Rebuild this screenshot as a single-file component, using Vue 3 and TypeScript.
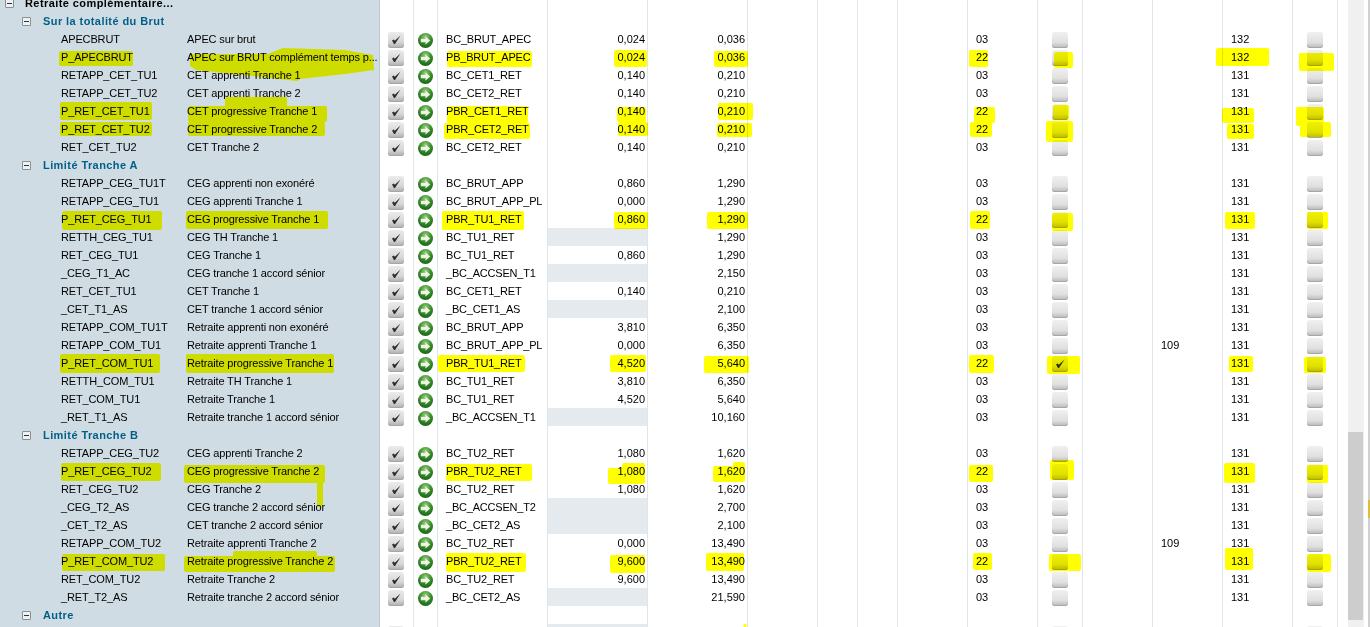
<script setup lang="ts">
type Row = {
  kind: 'root' | 'group' | 'item' | 'tail'
  code?: string
  label?: string
  base?: string
  a?: string
  b?: string
  o?: string
  on?: boolean
  n?: string
  t?: string
}

const item = (code: string, label: string, base: string, a: string, b: string, t = '131', o = '03', extra: Partial<Row> = {}): Row => ({
  kind: 'item', code, label, base, a, b, t, o, ...extra,
})

const rows: Row[] = [
  { kind: 'root', label: 'Retraite complémentaire...' },
  { kind: 'group', label: 'Sur la totalité du Brut' },
  item('APECBRUT', 'APEC sur brut', 'BC_BRUT_APEC', '0,024', '0,036', '132'),
  item('P_APECBRUT', 'APEC sur BRUT complément temps p...', 'PB_BRUT_APEC', '0,024', '0,036', '132', '22'),
  item('RETAPP_CET_TU1', 'CET apprenti Tranche 1', 'BC_CET1_RET', '0,140', '0,210'),
  item('RETAPP_CET_TU2', 'CET apprenti Tranche 2', 'BC_CET2_RET', '0,140', '0,210'),
  item('P_RET_CET_TU1', 'CET progressive Tranche 1', 'PBR_CET1_RET', '0,140', '0,210', '131', '22'),
  item('P_RET_CET_TU2', 'CET progressive Tranche 2', 'PBR_CET2_RET', '0,140', '0,210', '131', '22'),
  item('RET_CET_TU2', 'CET Tranche 2', 'BC_CET2_RET', '0,140', '0,210'),
  { kind: 'group', label: 'Limité Tranche A' },
  item('RETAPP_CEG_TU1T', 'CEG apprenti non exonéré', 'BC_BRUT_APP', '0,860', '1,290'),
  item('RETAPP_CEG_TU1', 'CEG apprenti Tranche 1', 'BC_BRUT_APP_PL', '0,000', '1,290'),
  item('P_RET_CEG_TU1', 'CEG progressive Tranche 1', 'PBR_TU1_RET', '0,860', '1,290', '131', '22'),
  item('RETTH_CEG_TU1', 'CEG TH Tranche 1', 'BC_TU1_RET', '', '1,290'),
  item('RET_CEG_TU1', 'CEG Tranche 1', 'BC_TU1_RET', '0,860', '1,290'),
  item('_CEG_T1_AC', 'CEG tranche 1 accord sénior', '_BC_ACCSEN_T1', '', '2,150'),
  item('RET_CET_TU1', 'CET Tranche 1', 'BC_CET1_RET', '0,140', '0,210'),
  item('_CET_T1_AS', 'CET tranche 1 accord sénior', '_BC_CET1_AS', '', '2,100'),
  item('RETAPP_COM_TU1T', 'Retraite apprenti non exonéré', 'BC_BRUT_APP', '3,810', '6,350'),
  item('RETAPP_COM_TU1', 'Retraite apprenti Tranche 1', 'BC_BRUT_APP_PL', '0,000', '6,350', '131', '03', { n: '109' }),
  item('P_RET_COM_TU1', 'Retraite progressive Tranche 1', 'PBR_TU1_RET', '4,520', '5,640', '131', '22', { on: true }),
  item('RETTH_COM_TU1', 'Retraite TH Tranche 1', 'BC_TU1_RET', '3,810', '6,350'),
  item('RET_COM_TU1', 'Retraite Tranche 1', 'BC_TU1_RET', '4,520', '5,640'),
  item('_RET_T1_AS', 'Retraite tranche 1 accord sénior', '_BC_ACCSEN_T1', '', '10,160'),
  { kind: 'group', label: 'Limité Tranche B' },
  item('RETAPP_CEG_TU2', 'CEG apprenti Tranche 2', 'BC_TU2_RET', '1,080', '1,620'),
  item('P_RET_CEG_TU2', 'CEG progressive Tranche 2', 'PBR_TU2_RET', '1,080', '1,620', '131', '22'),
  item('RET_CEG_TU2', 'CEG Tranche 2', 'BC_TU2_RET', '1,080', '1,620'),
  item('_CEG_T2_AS', 'CEG tranche 2 accord sénior', '_BC_ACCSEN_T2', '', '2,700'),
  item('_CET_T2_AS', 'CET tranche 2 accord sénior', '_BC_CET2_AS', '', '2,100'),
  item('RETAPP_COM_TU2', 'Retraite apprenti Tranche 2', 'BC_TU2_RET', '0,000', '13,490', '131', '03', { n: '109' }),
  item('P_RET_COM_TU2', 'Retraite progressive Tranche 2', 'PBR_TU2_RET', '9,600', '13,490', '131', '22'),
  item('RET_COM_TU2', 'Retraite Tranche 2', 'BC_TU2_RET', '9,600', '13,490'),
  item('_RET_T2_AS', 'Retraite tranche 2 accord sénior', '_BC_CET2_AS', '', '21,590'),
  { kind: 'group', label: 'Autre' },
  { kind: 'tail' },
]

// marker strokes painted over the grid: x, y, w, h
const strokes: number[][] = [
  [59, 51, 74, 15], [60, 102, 92, 18], [60, 122, 92, 14], [188, 106, 139, 16], [225, 97, 62, 10],
  [188, 122, 137, 14], [62, 211, 100, 19], [186, 211, 142, 18], [60, 354, 100, 19], [186, 354, 148, 19],
  [61, 463, 100, 18], [184, 465, 141, 18], [317, 480, 6, 27], [62, 554, 103, 17], [184, 556, 151, 16], [233, 551, 84, 6],
  [447, 51, 85, 16], [614, 50, 33, 17], [714, 51, 34, 16], [447, 106, 81, 17], [617, 107, 29, 15], [718, 103, 35, 17],
  [444, 123, 86, 16], [618, 122, 30, 14], [717, 123, 35, 14], [442, 211, 82, 19], [614, 212, 34, 17], [707, 212, 41, 17],
  [438, 355, 87, 17], [610, 355, 36, 17], [704, 356, 45, 17], [446, 464, 86, 17], [608, 468, 37, 16], [622, 463, 23, 6],
  [713, 466, 32, 16], [733, 462, 12, 6], [446, 553, 80, 19], [610, 555, 35, 18], [706, 553, 38, 18], [743, 624, 4, 3],
  [969, 50, 19, 17], [1054, 52, 19, 16], [1216, 48, 53, 18], [1299, 53, 35, 18], [974, 107, 21, 16], [1053, 105, 16, 15],
  [1222, 108, 32, 15], [1296, 107, 28, 19], [970, 122, 22, 15], [1046, 121, 27, 21], [1227, 124, 27, 15], [1300, 122, 31, 15],
  [970, 211, 20, 18], [1052, 213, 21, 18], [1225, 212, 30, 17], [1307, 212, 21, 17], [969, 355, 25, 18], [1047, 356, 33, 18],
  [1229, 356, 24, 16], [1304, 357, 22, 16], [969, 465, 24, 17], [1050, 460, 24, 20], [1224, 463, 31, 20], [1307, 465, 21, 18],
  [973, 553, 19, 17], [1049, 554, 32, 17], [1225, 548, 28, 22], [1307, 554, 24, 18],
]
const apecBlob = '190,54 268,54 283,48 345,50 373,55 374,70 345,74 300,79 297,81 270,78 196,70 190,66'
</script>

<template>
  <div class="screen">
    <svg class="defs" width="0" height="0" aria-hidden="true">
      <defs>
        <radialGradient id="ball" cx="50%" cy="28%" r="75%">
          <stop offset="0" stop-color="#9fd386" />
          <stop offset="0.45" stop-color="#3f9332" />
          <stop offset="1" stop-color="#155f13" />
        </radialGradient>
      </defs>
    </svg>

    <div class="grid">
      <div v-for="(r, i) in rows" :key="i" class="row">
        <div class="tree" :class="r.kind">
          <template v-if="r.kind === 'root' || r.kind === 'group'">
            <span class="toggle"></span>
            <span class="title">{{ r.label }}</span>
          </template>
          <template v-else-if="r.kind === 'item'">
            <span class="code">{{ r.code }}</span>
            <span class="label">{{ r.label }}</span>
          </template>
        </div>

        <div class="cell center">
          <span v-if="r.kind === 'item' || r.kind === 'tail'" class="box dark">
            <svg viewBox="0 0 16 16" width="16" height="16"><path d="M4 8.5 L6 12 L7 12 L12.5 3.5 L6.8 8.8 L5.8 7.6 Z" fill="#2e2e2e" /></svg>
          </span>
        </div>
        <div class="cell center">
          <svg v-if="r.kind === 'item' || r.kind === 'tail'" class="go" viewBox="0 0 16 16" width="15" height="15">
            <circle cx="8" cy="8" r="8" fill="url(#ball)" />
            <path d="M3 6.2 H8 V3.8 L13 8 L8 12.2 V9.8 H3 Z" fill="#eef3e2" />
          </svg>
        </div>
        <div class="cell text">{{ r.base }}</div>
        <div class="cell num" :class="{ blank: r.kind === 'tail' || (r.kind === 'item' && !r.a) }">{{ r.a }}</div>
        <div class="cell num">{{ r.b }}</div>
        <div class="cell"></div>
        <div class="cell"></div>
        <div class="cell"></div>
        <div class="cell"></div>
        <div class="cell text short">{{ r.o }}</div>
        <div class="cell center">
          <span v-if="r.kind === 'item' || r.kind === 'tail'" class="box">
            <svg v-if="r.on" viewBox="0 0 16 16" width="16" height="16"><path d="M4 8.5 L6 12 L7 12 L12.5 3.5 L6.8 8.8 L5.8 7.6 Z" fill="#2e2e2e" /></svg>
          </span>
        </div>
        <div class="cell"></div>
        <div class="cell text short">{{ r.n }}</div>
        <div class="cell text short">{{ r.t }}</div>
        <div class="cell center">
          <span v-if="r.kind === 'item' || r.kind === 'tail'" class="box"></span>
        </div>
      </div>
    </div>

    <div class="scrollbar"><div class="thumb"></div></div>
    <div class="edge"><div class="mark"></div></div>

    <svg class="marker" width="1370" height="627" viewBox="0 0 1370 627">
      <polygon :points="apecBlob" />
      <rect v-for="(s, i) in strokes" :key="i" :x="s[0]" :y="s[1]" :width="s[2]" :height="s[3]" rx="2" />
    </svg>
  </div>
</template>

<style>
html, body {
  margin: 0;
  overflow: hidden;
  background: #fff;
}
</style>

<style scoped>
.screen {
  position: relative;
  display: flex;
  width: 1370px;
  height: 627px;
  overflow: hidden;
  font-family: "Liberation Sans", Arial, sans-serif;
  font-size: 11px;
  color: #000;
}

.defs {
  position: absolute;
}

.grid {
  width: 1348px;
  flex: none;
  margin-top: -6px;
}

.row {
  display: grid;
  grid-template-columns: 380px 34px 24px 110px 100px 100px 70px 40px 40px 70px 70px 45px 70px 70px 70px 45px;
  height: 18px;
  line-height: 18px;
  white-space: nowrap;
}

.tree {
  display: flex;
  align-items: center;
  background: #cfdce3;
  border-right: 1px solid #b7cad6;
  box-sizing: border-box;
}

.tree.root {
  padding-left: 5px;
  font-weight: bold;
  letter-spacing: 0.42px;
}

.tree.group {
  padding-left: 22px;
  font-weight: bold;
  letter-spacing: 0.42px;
  color: #005f87;
}

.tree.item {
  padding-left: 61px;
  letter-spacing: -0.14px;
}

.toggle {
  position: relative;
  flex: none;
  width: 9px;
  height: 9px;
  box-sizing: border-box;
  border: 1px solid #8a8f96;
  border-radius: 1px;
  background: #eef1f4;
}

.toggle::after {
  content: "";
  position: absolute;
  left: 1px;
  right: 1px;
  top: 3px;
  height: 1px;
  background: #333;
}

.tree.root .toggle {
  margin-right: 11px;
}

.tree.group .toggle {
  margin-right: 12px;
}

.code {
  flex: none;
  width: 126px;
}

.label {
  flex: none;
  width: 190px;
  overflow: hidden;
}

.cell {
  box-sizing: border-box;
  border-right: 1px solid #dde6ea;
  background: #fff;
  overflow: hidden;
}

.center {
  display: flex;
  align-items: center;
  justify-content: center;
  padding-top: 2px;
}

.text {
  padding-left: 8px;
  letter-spacing: -0.2px;
}

.short {
  letter-spacing: 0;
}

.num {
  padding-right: 2px;
  text-align: right;
}

.blank {
  background: #e4eaee;
}

.box {
  display: block;
  flex: none;
  width: 16px;
  height: 16px;
  border-radius: 3px;
  background: linear-gradient(#f0f0f0, #e0e0e0 65%, #b8b8b8);
  box-shadow: inset 0 -1px 0 #a6a6a6;
}

.box.dark {
  margin-right: 1px;
  background: linear-gradient(#ebebeb, #d8d8d8 60%, #aeaeae);
}

.box svg,
.go {
  display: block;
}

.scrollbar {
  flex: none;
  width: 16px;
  height: 627px;
  background: #f0f0f0;
}

.thumb {
  width: 15px;
  height: 188px;
  margin-top: 432px;
  background: #cdcdcd;
}

.edge {
  flex: none;
  width: 2px;
  height: 627px;
  margin-left: 4px;
  background: #d0d0d0;
}

.mark {
  height: 18px;
  margin-top: 500px;
  background: #e0bb3c;
}

.marker {
  position: absolute;
  left: 0;
  top: 0;
  mix-blend-mode: multiply;
  pointer-events: none;
}

.marker polygon,
.marker rect {
  fill: #ffff00;
}
</style>
